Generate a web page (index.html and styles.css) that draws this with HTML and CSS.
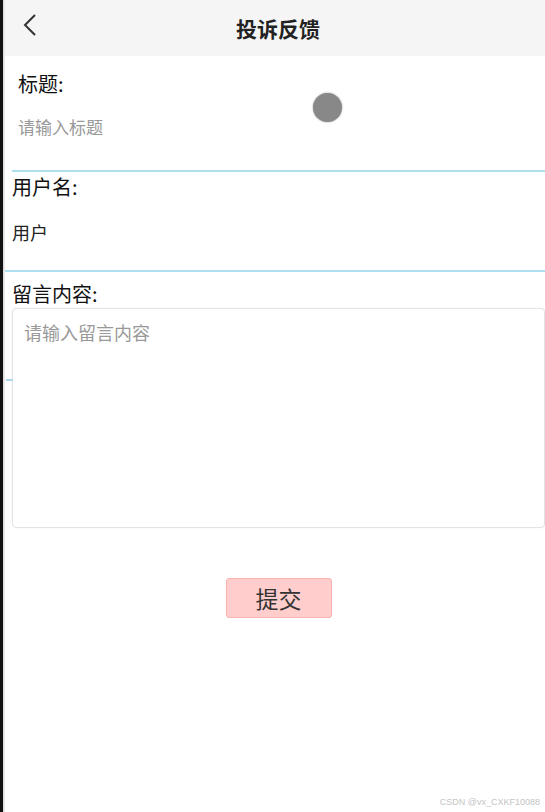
FILE: index.html
```html
<!DOCTYPE html>
<html lang="zh">
<head>
<meta charset="utf-8">
<link rel="stylesheet" href="styles.css">
</head>
<body>
<div class="screen">
  <div class="edge"></div>
  <div class="app">
    <header class="topbar">
      <svg class="back" width="16" height="24" viewBox="0 0 16 24"><path d="M13 2 L3 12 L13 22" fill="none" stroke="#333" stroke-width="2"/></svg>
      <h1 class="title">投诉反馈</h1>
    </header>
    <main class="form">
      <section class="field field-title">
        <div class="label">标题:</div>
        <div class="input placeholder">请输入标题</div>
      </section>
      <section class="field field-user">
        <div class="label">用户名:</div>
        <div class="input value">用户</div>
      </section>
      <section class="field field-msg">
        <div class="label">留言内容:</div>
        <div class="textarea"><span class="placeholder">请输入留言内容</span></div>
      </section>
      <div class="actions">
        <button class="submit">提交</button>
      </div>
    </main>
    <div class="touch"></div>
    <div class="tick"></div>
    <div class="watermark">CSDN @vx_CXKF10088</div>
  </div>
</div>
</body>
</html>
```
FILE: styles.css
```css
* { box-sizing: border-box; }
html, body { margin: 0; padding: 0; }
body {
  width: 545px;
  height: 812px;
  overflow: hidden;
  font-family: "Noto Sans CJK SC", "Microsoft YaHei", sans-serif;
  color: #222;
  background: #fff;
}
.screen { display: flex; height: 812px; }
.edge {
  width: 5px;
  background: linear-gradient(to right, #111 0, #111 3px, #d8d8d8 3px, #eee 5px);
  flex: none;
}
.app { position: relative; flex: 1; background: #fff; }
.topbar {
  height: 56px;
  background: #f5f5f5;
  display: flex;
  align-items: center;
  justify-content: center;
  position: relative;
}
.back { position: absolute; left: 17px; top: 13px; }
.title {
  margin: 0 0 0 6px;
  font-size: 21px;
  font-weight: bold;
  color: #222;
}
.form { display: flex; flex-direction: column; }
.label { font-size: 20px; line-height: 24px; color: #111; font-weight: 400; }
.field-title {
  padding: 16px 0 0 6px;
  margin-left: 7px;
  height: 116px;
  border-bottom: 2px solid #aee0f0;
  display: flex;
  flex-direction: column;
}
.placeholder { color: #999; }
.field-title .input { margin-top: 21px; font-size: 17px; line-height: 20px; }
.field-user {
  height: 100px;
  padding: 3px 0 0 7px;
  border-bottom: 2px solid #aee0f0;
  display: flex;
  flex-direction: column;
}
.field-user .input { margin-top: 22px; font-size: 18px; line-height: 22px; color: #222; }
.field-msg { padding: 10px 0 0 7px; }
.textarea {
  margin-top: 2px;
  height: 220px;
  border: 1px solid #e3e3e3;
  border-radius: 4px;
  padding: 11px 11px;
  font-size: 18px;
  line-height: 24px;
  box-shadow: 0 0 2px rgba(0,0,0,0.05);
}
.actions { display: flex; justify-content: center; padding-top: 50px; padding-left: 7px; }
.submit {
  width: 106px;
  height: 40px;
  background: #ffcdcb;
  border: 1px solid #f6b3b0;
  border-radius: 3px;
  font-family: "Noto Sans CJK SC", sans-serif;
  font-size: 23px;
  padding: 0;
  color: #333;
}
.touch {
  position: absolute;
  left: 308px; top: 93px;
  width: 29px; height: 29px;
  border-radius: 50%;
  background: #888;
  box-shadow: 0 0 2px #999;
}
.tick {
  position: absolute;
  left: 1px; top: 379px;
  width: 7px; height: 2px;
  background: #a9d6ea;
}
.watermark {
  position: absolute;
  right: 5px; bottom: 5px;
  font-family: "Liberation Sans", Arial, sans-serif;
  font-size: 9px;
  color: #c4c4c4;
}
```
